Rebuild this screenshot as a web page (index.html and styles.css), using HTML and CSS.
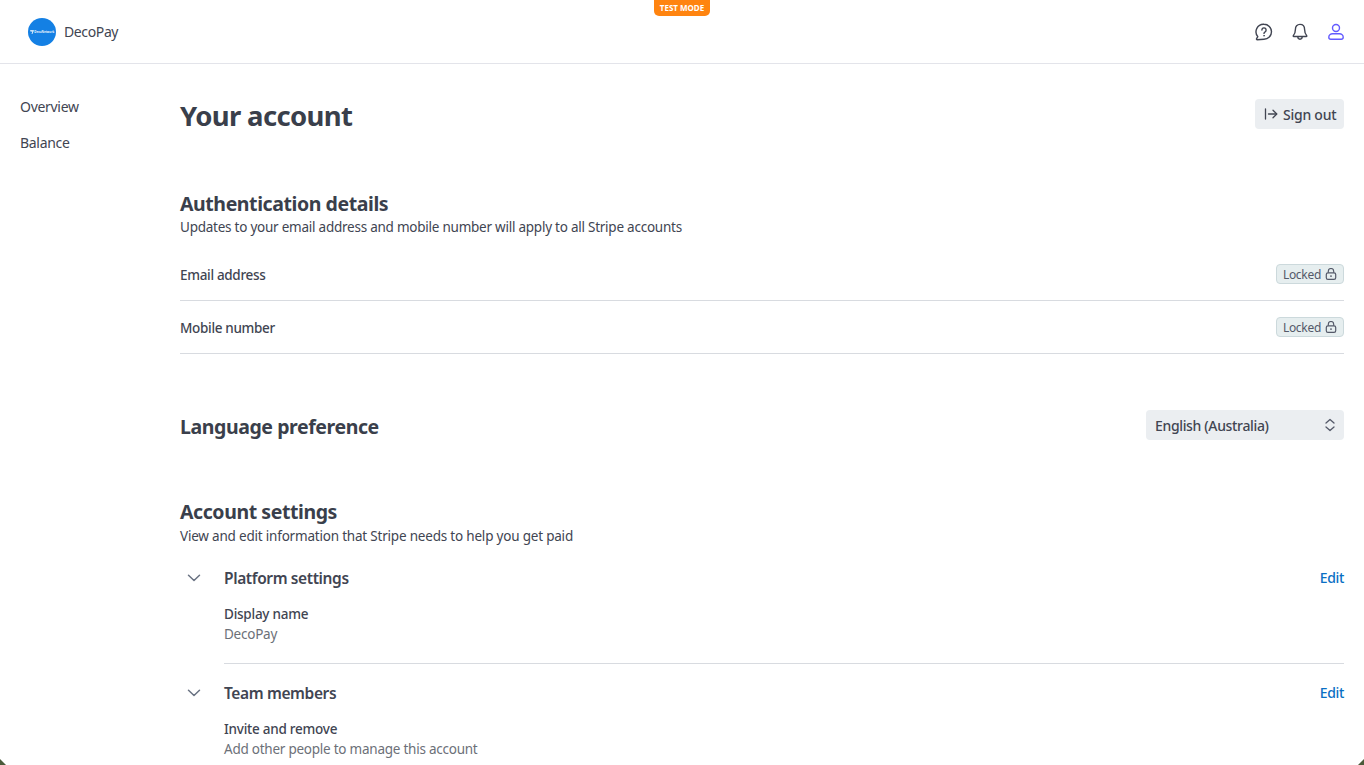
FILE: index.html
```html
<!DOCTYPE html>
<html lang="en">
<head>
<meta charset="utf-8">
<title>DecoPay</title>
<link rel="stylesheet" href="styles.css">
</head>
<body>
<header class="topbar">
  <div class="brand">
    <span class="logo"><svg class="logo-mark" viewBox="0 0 6 6" fill="#fff"><path d="M0 .5h6L3.500 6H2.300l1.600-3.800H.8z"/></svg><span class="logo-text">DecoNetwork</span></span>
    <span class="brand-name">DecoPay</span>
  </div>
  <span class="test-badge">TEST MODE</span>
  <div class="top-icons">
    <svg class="ticon" viewBox="0 0 18 18" fill="none" stroke="#414552" stroke-width="1.4" stroke-linecap="round" stroke-linejoin="round"><path d="M9 1.300a7.500 7.500 0 0 1 0 15c-1.200 0-3 0-6.800.4-.6 0-.9-.5-.6-1l1.200-2.100A7.500 7.500 0 0 1 9 1.300z"/><path d="M6.900 7a2.100 2.100 0 1 1 3.200 1.800c-.7.4-1.100.8-1.100 1.600"/><circle cx="9" cy="12.700" r=".5" fill="#414552" stroke-width=".6"/></svg>
    <svg class="ticon" viewBox="0 0 18 18" fill="none" stroke="#414552" stroke-width="1.4" stroke-linecap="round" stroke-linejoin="round"><path d="M9 1.400c-2.900 0-4.600 2.100-4.600 5 0 3.400-1 4.900-2.100 6.200-.3.400 0 .9.400.9h12.600c.5 0 .7-.5.400-.9-1.100-1.300-2.100-2.800-2.100-6.200 0-2.900-1.700-5-4.600-5z"/><path d="M6.800 13.600c0 1.500 1 2.600 2.200 2.600s2.200-1.100 2.200-2.600"/></svg>
    <svg class="ticon" viewBox="0 0 18 18" fill="none" stroke="#635bff" stroke-width="1.4" stroke-linecap="round" stroke-linejoin="round"><circle cx="9" cy="5" r="3.500"/><path d="M5.500 10.800h7c2 0 3.700 1.500 3.700 3.400 0 1.200-.9 2-2 2H3.800c-1.100 0-2-.8-2-2 0-1.900 1.700-3.400 3.700-3.400z"/></svg>
  </div>
</header>
<div class="shell">
  <nav class="sidebar">
    <a class="nav-item">Overview</a>
    <a class="nav-item">Balance</a>
  </nav>
  <main class="content">
    <div class="title-row">
      <h1 class="page-title">Your account</h1>
      <button class="signout">
        <svg class="signout-icon" viewBox="0 0 14 14" fill="none" stroke="#414552" stroke-width="1.300" stroke-linecap="round" stroke-linejoin="round"><path d="M1.500 2v10"/><path d="M4.500 7h8"/><path d="M9 3.200 12.800 7 9 10.800"/></svg>
        Sign out
      </button>
    </div>

    <section class="auth">
      <h2 class="section-title">Authentication details</h2>
      <p class="section-sub">Updates to your email address and mobile number will apply to all Stripe accounts</p>
      <div class="lock-row">
        <span class="lock-label">Email address</span>
        <span class="locked">Locked
          <svg class="lock-icon" viewBox="0 0 12 12" fill="none" stroke="#545969" stroke-width="1.200"><rect x="1.300" y="4.800" width="9.400" height="6.600" rx="1.700"/><path d="M3.300 4.800V3.200a2.700 2.700 0 0 1 5.400 0v1.600"/><circle cx="6" cy="8.100" r=".9" fill="#545969" stroke="none"/></svg>
        </span>
      </div>
      <div class="lock-row">
        <span class="lock-label">Mobile number</span>
        <span class="locked">Locked
          <svg class="lock-icon" viewBox="0 0 12 12" fill="none" stroke="#545969" stroke-width="1.200"><rect x="1.300" y="4.800" width="9.400" height="6.600" rx="1.700"/><path d="M3.300 4.800V3.200a2.700 2.700 0 0 1 5.400 0v1.600"/><circle cx="6" cy="8.100" r=".9" fill="#545969" stroke="none"/></svg>
        </span>
      </div>
    </section>

    <section class="lang-row">
      <h2 class="section-title lang-title">Language preference</h2>
      <div class="select">
        <span>English (Australia)</span>
        <svg class="select-icon" viewBox="0 0 12 14" fill="none" stroke="#545969" stroke-width="1.300" stroke-linecap="round" stroke-linejoin="round"><path d="M2 5 6 1.500 10 5"/><path d="M2 9l4 3.500L10 9"/></svg>
      </div>
    </section>

    <section class="settings">
      <h2 class="section-title">Account settings</h2>
      <p class="section-sub">View and edit information that Stripe needs to help you get paid</p>

      <div class="group">
        <div class="group-head">
          <svg class="chevron" viewBox="0 0 14 8" fill="none" stroke="#6a7383" stroke-width="1.500" stroke-linecap="round" stroke-linejoin="round"><path d="M1.500 1.200 7 6.500l5.500-5.300"/></svg>
          <h3 class="group-title">Platform settings</h3>
          <a class="edit">Edit</a>
        </div>
        <div class="group-body">
          <div class="field-label">Display name</div>
          <div class="field-value">DecoPay</div>
        </div>
      </div>

      <div class="group">
        <div class="group-head">
          <svg class="chevron" viewBox="0 0 14 8" fill="none" stroke="#6a7383" stroke-width="1.500" stroke-linecap="round" stroke-linejoin="round"><path d="M1.500 1.200 7 6.500l5.500-5.300"/></svg>
          <h3 class="group-title">Team members</h3>
          <a class="edit">Edit</a>
        </div>
        <div class="group-body">
          <div class="field-label">Invite and remove</div>
          <div class="field-value">Add other people to manage this account</div>
        </div>
      </div>
    </section>
  </main>
</div>
<span class="corner corner-left"></span>
<span class="corner corner-right"></span>
</body>
</html>
```

FILE: styles.css
```css
* { box-sizing: border-box; }
html, body { height: 100%; }
body {
  margin: 0;
  height: 765px;
  overflow: hidden;
  background: #fff;
  color: #414552;
  font-family: "Noto Sans", "Open Sans", sans-serif;
  font-size: 13.500px;
  letter-spacing: -.24px;
  position: relative;
}
.topbar {
  height: 64px;
  border-bottom: 1px solid #e3e4ea;
  display: flex;
  align-items: center;
  justify-content: space-between;
  padding: 0 19px 0 28px;
  position: relative;
}
.brand { display: flex; align-items: center; gap: 8px; }
.logo {
  width: 28px;
  height: 28px;
  border-radius: 50%;
  background: #1480e4;
  display: flex;
  align-items: center;
  justify-content: center;
  gap: .5px;
  overflow: hidden;
}
.logo-mark { width: 4px; height: 4px; flex: none; }
.logo-text { font-size: 3px; color: #fff; letter-spacing: 0; font-weight: 600; white-space: nowrap; }
.brand-name { font-size: 14px; letter-spacing: -.38px; color: #414552; }
.test-badge {
  position: absolute;
  left: 654px;
  top: 0;
  width: 56px;
  height: 16px;
  background: #ff8410;
  color: #fff;
  font-size: 8px;
  font-weight: 700;
  letter-spacing: 0;
  line-height: 15px;
  text-align: center;
  border-radius: 0 0 5px 5px;
  white-space: nowrap;
}
.top-icons { display: flex; align-items: center; gap: 18px; }
.ticon { width: 18px; height: 18px; display: block; }
.shell { display: flex; }
.sidebar {
  width: 180px;
  flex: none;
  padding: 33px 0 0 20px;
  display: flex;
  flex-direction: column;
  gap: 16px;
}
.nav-item { font-size: 14px; letter-spacing: -.3px; line-height: 20px; color: #414552; }
.content { flex: 1; min-width: 0; padding: 0 20px 0 0; }
.title-row {
  display: flex;
  justify-content: space-between;
  align-items: flex-start;
  height: 104px;
  padding-top: 35px;
}
.page-title { margin: -1px 0 0; font-size: 27.500px; letter-spacing: -.65px; line-height: 36px; font-weight: 700; color: #3a3f4b; }
.signout {
  width: 89px;
  height: 30px;
  padding: 0 0 0 9px;
  border: 0;
  border-radius: 4px;
  background: #ebeef1;
  color: #414552;
  font: 500 14px "Noto Sans", sans-serif;
  letter-spacing: -.25px;
  display: flex;
  align-items: center;
  gap: 5px;
}
.signout-icon { width: 14px; height: 14px; }
.section-title { margin: 0; font-size: 19.500px; letter-spacing: -.42px; line-height: 28px; font-weight: 700; color: #3a3f4b; }
.section-sub { margin: 0; line-height: 20px; color: #414552; }
.settings .section-sub { letter-spacing: -.2px; }
.auth { padding-top: 22px; }
.auth .section-sub { margin-top: -1px; margin-bottom: 11px; }
.lock-row {
  display: flex;
  justify-content: space-between;
  align-items: center;
  height: 53px;
  border-bottom: 1px solid #d8dbe0;
}
.lock-label { font-weight: 500; letter-spacing: -.32px; line-height: 20px; padding-top: 2px; color: #414552; }
.locked {
  display: flex;
  align-items: center;
  gap: 4px;
  height: 20px;
  padding: 0 6px 0 6px;
  background: #e6eeef;
  border: 1px solid #ccd9dc;
  border-radius: 4px;
  font-size: 12px;
  letter-spacing: -.3px;
  color: #545969;
}
.lock-icon { width: 12px; height: 12px; }
.lang-row {
  display: flex;
  justify-content: space-between;
  align-items: center;
  margin-top: 56px;
  height: 30px;
}
.lang-title { padding-top: 4px; }
.select {
  width: 198px;
  height: 30px;
  padding: 0 8px 0 9px;
  background: #ebeef1;
  border-radius: 4px;
  display: flex;
  align-items: center;
  justify-content: space-between;
  font-size: 14px;
  letter-spacing: -.34px;
  font-weight: 500;
  color: #414552;
}
.select-icon { width: 12px; height: 14px; }
.settings { margin-top: 58px; }
.group { margin-top: 17px; }
.group + .group { margin-top: 14px; }
.group-head { display: flex; align-items: center; height: 30px; }
.chevron { width: 14px; height: 8px; margin: 0 23px 0 7px; flex: none; }
.group-title { margin: 0; flex: 1; font-size: 15.500px; letter-spacing: -.38px; font-weight: 600; line-height: 24px; color: #414552; }
.edit { font-size: 14px; letter-spacing: -.35px; font-weight: 500; margin-bottom: 2px; color: #0a6fc4; }
.group-body { margin: 11px 0 0 44px; padding-bottom: 19px; border-bottom: 1px solid #d8dbe0; }
.group + .group .group-body { border-bottom: 0; }
.field-label { line-height: 20px; font-weight: 500; color: #414552; }
.field-value { line-height: 20px; color: #6c7078; }
.corner { position: absolute; bottom: 0; width: 6px; height: 6px; background: #4a5a3a; }
.corner-left { left: 0; clip-path: polygon(0 0, 100% 100%, 0 100%); }
.corner-right { right: 0; clip-path: polygon(100% 0, 100% 100%, 0 100%); }
```
